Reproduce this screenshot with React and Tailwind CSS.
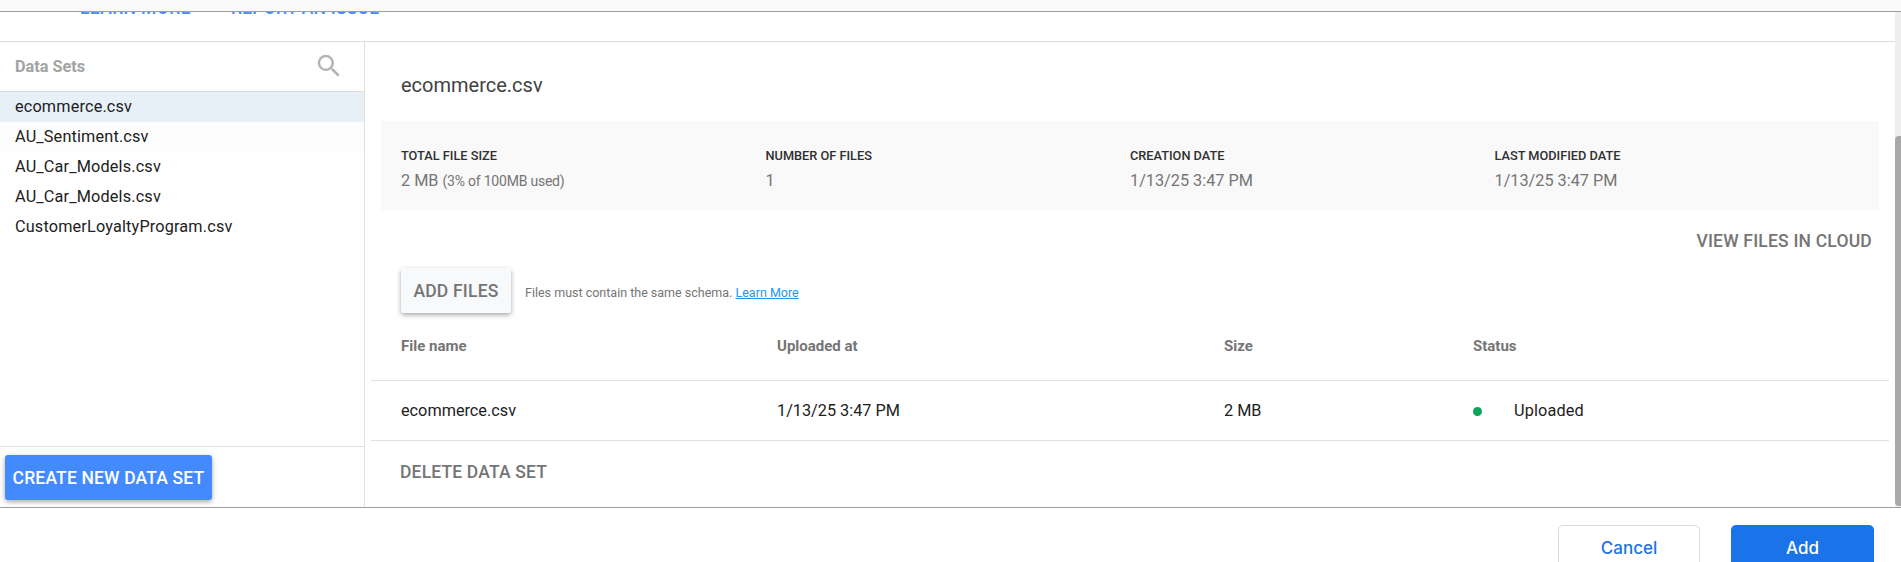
import React from "react";

const dataSets = [
  "ecommerce.csv",
  "AU_Sentiment.csv",
  "AU_Car_Models.csv",
  "AU_Car_Models.csv",
  "CustomerLoyaltyProgram.csv",
];

const stats = [
  { label: "TOTAL FILE SIZE", value: "2 MB", note: "(3% of 100MB used)" },
  { label: "NUMBER OF FILES", value: "1" },
  { label: "CREATION DATE", value: "1/13/25 3:47 PM" },
  { label: "LAST MODIFIED DATE", value: "1/13/25 3:47 PM" },
];

function SearchIcon() {
  return (
    <svg viewBox="0 0 24 24" className="-mt-px size-[30px] fill-[#b3b3b3]">
      <path d="M15.5 14h-.79l-.28-.27A6.471 6.471 0 0 0 16 9.5 6.5 6.5 0 1 0 9.5 16c1.61 0 3.09-.59 4.23-1.57l.27.28v.79l5 4.99L20.49 19l-4.99-5zm-6 0C7.01 14 5 11.99 5 9.5S7.01 5 9.5 5 14 7.01 14 9.5 11.99 14 9.5 14z" />
    </svg>
  );
}

function Sidebar() {
  return (
    <aside className="flex w-[365px] shrink-0 flex-col border-r border-[#e0e0e0]">
      <div className="flex h-[50px] items-center justify-between border-b border-[#dadce0] pr-[20px] pl-[15px]">
        <h2 className="text-[16.25px] leading-5 font-bold text-[#a3a3a3]">Data Sets</h2>
        <SearchIcon />
      </div>
      <ul className="flex-1">
        {dataSets.map((name, i) => (
          <li
            key={i}
            className={
              i === 0
                ? "flex h-[30px] items-center bg-[#e8f0f7] pl-[15px] text-[16.25px] tracking-[0.16px] text-[#212121]"
                : i === 1
                  ? "flex h-[30px] items-center bg-[#fdfdfd] pl-[15px] text-[16.25px] tracking-[0.16px] text-[#212121]"
                  : "flex h-[30px] items-center pl-[15px] text-[16.25px] tracking-[0.16px] text-[#212121]"
            }
          >
            {name}
          </li>
        ))}
      </ul>
      <div className="h-[61px] border-t border-[#e0e0e0] pt-2 pl-[5px]">
        <button className="h-[45px] w-[207px] rounded-[3px] bg-[#448aff] pt-[2px] text-[17.5px] font-medium tracking-[0.16px] whitespace-nowrap text-white shadow-[0_2px_5px_0_rgba(0,0,0,0.34)]">
          CREATE NEW DATA SET
        </button>
      </div>
    </aside>
  );
}

function Details() {
  return (
    <main className="flex flex-1 flex-col">
      <h1 className="pt-[30px] pl-[36px] text-[20px] leading-[26px] text-[#424242]">ecommerce.csv</h1>
      <section className="mt-[23px] mr-4 ml-4 grid h-[89px] grid-cols-[364.5px_364.5px_364.5px_1fr] bg-[#f9f9f9] pt-[25px] pl-5">
        {stats.map((s) => (
          <div key={s.label}>
            <div className="text-[12.75px] leading-5 font-medium text-[#303030]">{s.label}</div>
            <div className="pt-[3px] text-[16.25px] leading-6 text-[#757575]">
              {s.value} {s.note && <span className="text-[14px] tracking-[-0.22px]">{s.note}</span>}
            </div>
          </div>
        ))}
      </section>
      <div className="flex h-[58px] items-start justify-end pt-5 pr-[23px] text-[17.5px] leading-[22px] font-medium tracking-[0.2px] text-[#757575]">
        VIEW FILES IN CLOUD
      </div>
      <div className="flex h-[45px] items-center pl-[36px]">
        <button className="h-[45px] w-[110px] rounded-[3px] bg-[#f8f9fb] pt-[2px] text-[17.5px] font-medium tracking-[0.2px] text-[#757575] shadow-[0_2px_5px_0_rgba(0,0,0,0.34)]">
          ADD FILES
        </button>
        <p className="pt-[5px] pl-[14px] text-[12.5px] text-[#757575]">
          Files must contain the same schema. <a className="text-[#2196f3] underline">Learn More</a>
        </p>
      </div>
      <div className="mr-1.5 ml-1.5">
        <div className="grid h-[68px] grid-cols-[376px_447px_249px_1fr] border-b border-[#e0e0e0] pt-[23px] pl-[30px] text-[15px] leading-5 font-bold text-[#757575]">
          <span>File name</span>
          <span>Uploaded at</span>
          <span>Size</span>
          <span>Status</span>
        </div>
        <div className="grid h-[60px] grid-cols-[376px_447px_249px_1fr] items-center border-b border-[#e0e0e0] pl-[30px] text-[16.25px] leading-6 text-[#212121]">
          <span>ecommerce.csv</span>
          <span>1/13/25 3:47 PM</span>
          <span>2 MB</span>
          <span className="flex items-center">
            <i className="mt-0.5 mr-8 size-[9px] rounded-full bg-[#0fa35a]" />
            <span className="tracking-[0.15px]">Uploaded</span>
          </span>
        </div>
      </div>
      <div className="pt-5 pl-[35px] text-[17.5px] leading-[22px] font-medium tracking-[0.16px] text-[#757575]">
        DELETE DATA SET
      </div>
    </main>
  );
}

export default function App() {
  return (
    <div className="flex h-[562px] w-[1901px] flex-col overflow-hidden bg-white font-[Roboto,sans-serif]">
      <div className="h-3 shrink-0 border-b border-[#9aa0a6] bg-[#fafafa]" />
      <div className="flex h-[495px] shrink-0">
        <div className="flex flex-1 flex-col">
          <nav className="flex h-[30px] shrink-0 items-start gap-[40px] overflow-hidden border-b border-[#dadce0] pl-[80px] text-[17.5px] leading-[22px] font-medium text-[#448aff]">
            <a className="-mt-[15px] tracking-[0.4px]">LEARN MORE</a>
            <a className="-mt-[15px] tracking-[0.22px]">REPORT AN ISSUE</a>
          </nav>
          <div className="flex flex-1">
            <Sidebar />
            <Details />
          </div>
        </div>
        <div className="w-1.5 bg-[#eeeeee] pt-[124px]">
          <div className="h-[370px] rounded-l-[4px] bg-[#a8a8a8]" />
        </div>
      </div>
      <footer className="flex h-[55px] shrink-0 items-start justify-end gap-[31px] border-t border-[#9e9e9e] pt-[17px] pr-[27px] font-[Inter,sans-serif] text-[17px] font-medium">
        <button className="h-[46px] w-[142px] rounded-[5px] border border-[#dadce0] pt-0.5 text-[#1a73e8]">Cancel</button>
        <button className="h-[46px] w-[143px] rounded-[5px] bg-[#1a73e8] pt-0.5 text-white">Add</button>
      </footer>
    </div>
  );
}
